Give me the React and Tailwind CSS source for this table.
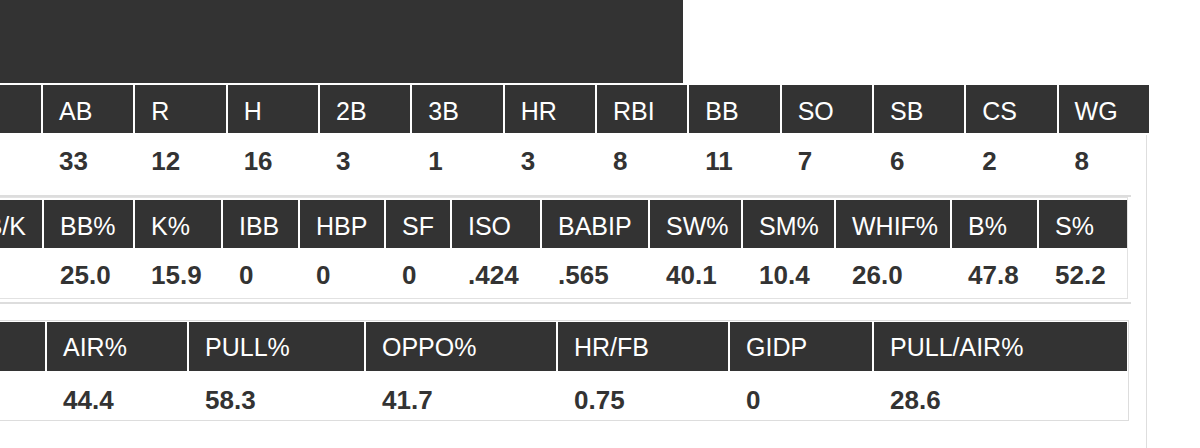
const counting = [
  ['', ''],
  ['AB', '33'],
  ['R', '12'],
  ['H', '16'],
  ['2B', '3'],
  ['3B', '1'],
  ['HR', '3'],
  ['RBI', '8'],
  ['BB', '11'],
  ['SO', '7'],
  ['SB', '6'],
  ['CS', '2'],
  ['WG', '8'],
];

const rates = [
  { label: 'BB/K', value: '', w: 'w-[89px]' },
  { label: 'BB%', value: '25.0', w: 'w-[89px]' },
  { label: 'K%', value: '15.9', w: 'w-[86px]' },
  { label: 'IBB', value: '0', w: 'w-[75px]' },
  { label: 'HBP', value: '0', w: 'w-[84px]' },
  { label: 'SF', value: '0', w: 'w-[64px]' },
  { label: 'ISO', value: '.424', w: 'w-[88px]' },
  { label: 'BABIP', value: '.565', w: 'w-[106px]' },
  { label: 'SW%', value: '40.1', w: 'w-[91px]' },
  { label: 'SM%', value: '10.4', w: 'w-[91px]' },
  { label: 'WHIF%', value: '26.0', w: 'w-[114px]' },
  { label: 'B%', value: '47.8', w: 'w-[85px]' },
  { label: 'S%', value: '52.2', w: 'w-[88px]' },
];

// first column label sits off-screen on the left
const batted = [
  { id: 'gb', label: '', value: '', w: 'w-[90px]' },
  { id: 'air', label: 'AIR%', value: '44.4', w: 'w-[140px]' },
  { id: 'pull', label: 'PULL%', value: '58.3', w: 'w-[175px]' },
  { id: 'oppo', label: 'OPPO%', value: '41.7', w: 'w-[190px]' },
  { id: 'hrfb', label: 'HR/FB', value: '0.75', w: 'w-[170px]' },
  { id: 'gidp', label: 'GIDP', value: '0', w: 'w-[142px]' },
  { id: 'pullair', label: 'PULL/AIR%', value: '28.6', w: 'w-[253px]' },
];

const head = 'bg-[#333] text-white text-[25px] leading-none flex items-center';
const cell = 'text-[#333] text-[26px] font-bold leading-none flex items-center';

export default function App() {
  return (
    <div className="w-[1200px] h-[448px] overflow-hidden bg-white font-['Liberation_Sans',Arial,sans-serif]">
      {/* title bar */}
      <div className="w-[683px] h-[83px] bg-[#333]" />

      {/* counting stats header */}
      <div className="ml-[-50px] mt-[2px] w-[1199px] h-[48px] flex gap-[2px]">
        {counting.map(([label], i) => (
          <div
            key={i}
            className={`${head} pl-[16px] pt-[5px] ${i === 0 ? 'w-[91px] shrink-0' : 'flex-1'}`}
          >
            {label}
          </div>
        ))}
      </div>

      <div className="w-[1147px] h-[315px] border-r border-[#dedede]">
        {/* counting stats values */}
        <div className="ml-[-50px] mt-[2px] w-[1199px] h-[52px] flex gap-[2px]">
          {counting.map(([, value], i) => (
            <div
              key={i}
              className={`${cell} pl-[16px] ${i === 0 ? 'w-[91px] shrink-0' : 'flex-1'}`}
            >
              {value}
            </div>
          ))}
        </div>

        {/* rate stats */}
        <div className="mt-[8px] ml-[-60px] w-[1191px] border-y-2 border-[#dddddd] pb-[3px]">
          <div className="ml-[10px] w-fit border border-[#e2e2e2] p-[2px] pr-0">
            <div className="flex gap-[2px] h-[48px]">
              {rates.map((c) => (
                <div key={c.label} className={`${head} ${c.w} shrink-0 pl-[16px] pt-[5px]`}>
                  {c.label}
                </div>
              ))}
            </div>
            <div className="flex gap-[2px] h-[46px] mt-[2px]">
              {rates.map((c) => (
                <div key={c.label} className={`${cell} ${c.w} shrink-0 pl-[16px] pt-[4px]`}>
                  {c.value}
                </div>
              ))}
            </div>
          </div>
        </div>

        {/* batted ball stats */}
        <div className="mt-[16px] ml-[-47px] w-fit border border-[#dddddd] p-[1px]">
          <div className="flex gap-[2px] h-[49px]">
            {batted.map((c) => (
              <div key={c.id} className={`${head} ${c.w} shrink-0 pl-[16px] pt-[2px]`}>
                {c.label}
              </div>
            ))}
          </div>
          <div className="flex gap-[2px] h-[46px] mt-[2px]">
            {batted.map((c) => (
              <div key={c.id} className={`${cell} ${c.w} shrink-0 pl-[16px] pt-[7px]`}>
                {c.value}
              </div>
            ))}
          </div>
        </div>
      </div>
    </div>
  );
}
